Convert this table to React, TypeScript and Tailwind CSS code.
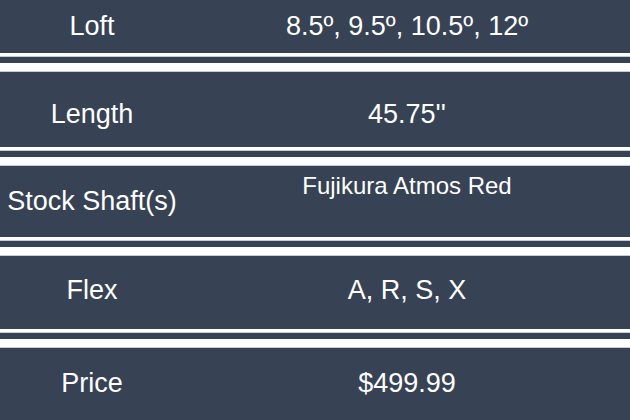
import React from 'react';

const rows = [
  { label: 'Loft', value: '8.5º, 9.5º, 10.5º, 12º', h: 'h-[53px]', pad: 'pt-0', top: false },
  { label: 'Length', value: "45.75''", h: 'h-[75px]', pad: 'pt-[9px]', top: false },
  { label: 'Stock Shaft(s)', value: 'Fujikura Atmos Red', h: 'h-[71px]', pad: 'pt-0', top: true },
  { label: 'Flex', value: 'A, R, S, X', h: 'h-[73px]', pad: 'pb-[5px]', top: false },
  { label: 'Price', value: '$499.99', h: 'h-[72px]', pad: 'pb-[1px]', top: false },
];

function Divider() {
  return (
    <div className="flex flex-col">
      <div className="h-[4px] bg-white border-b border-[#c9cdd3]"></div>
      <div className="h-[6px]"></div>
      <div className="h-[9px] bg-white border-b border-[#c9cdd3]"></div>
    </div>
  );
}

export default function App() {
  return (
    <div
      className="w-[630px] h-[420px] bg-[#374354] text-white flex flex-col overflow-hidden"
      style={{ fontFamily: '"Liberation Sans", Arial, sans-serif' }}
    >
      {rows.map((row, idx) => (
        <React.Fragment key={row.label}>
          {idx > 0 && <Divider />}
          <div className={`${row.h} ${row.pad} flex`}>
            <div className="w-[184px] flex items-center justify-center text-[27px] whitespace-nowrap">
              {row.label}
            </div>
            <div
              className={`flex-1 flex justify-center whitespace-nowrap ${
                row.top ? 'items-start pt-[2px] text-[24px]' : 'items-center text-[27px]'
              }`}
            >
              {row.value}
            </div>
          </div>
        </React.Fragment>
      ))}
    </div>
  );
}
